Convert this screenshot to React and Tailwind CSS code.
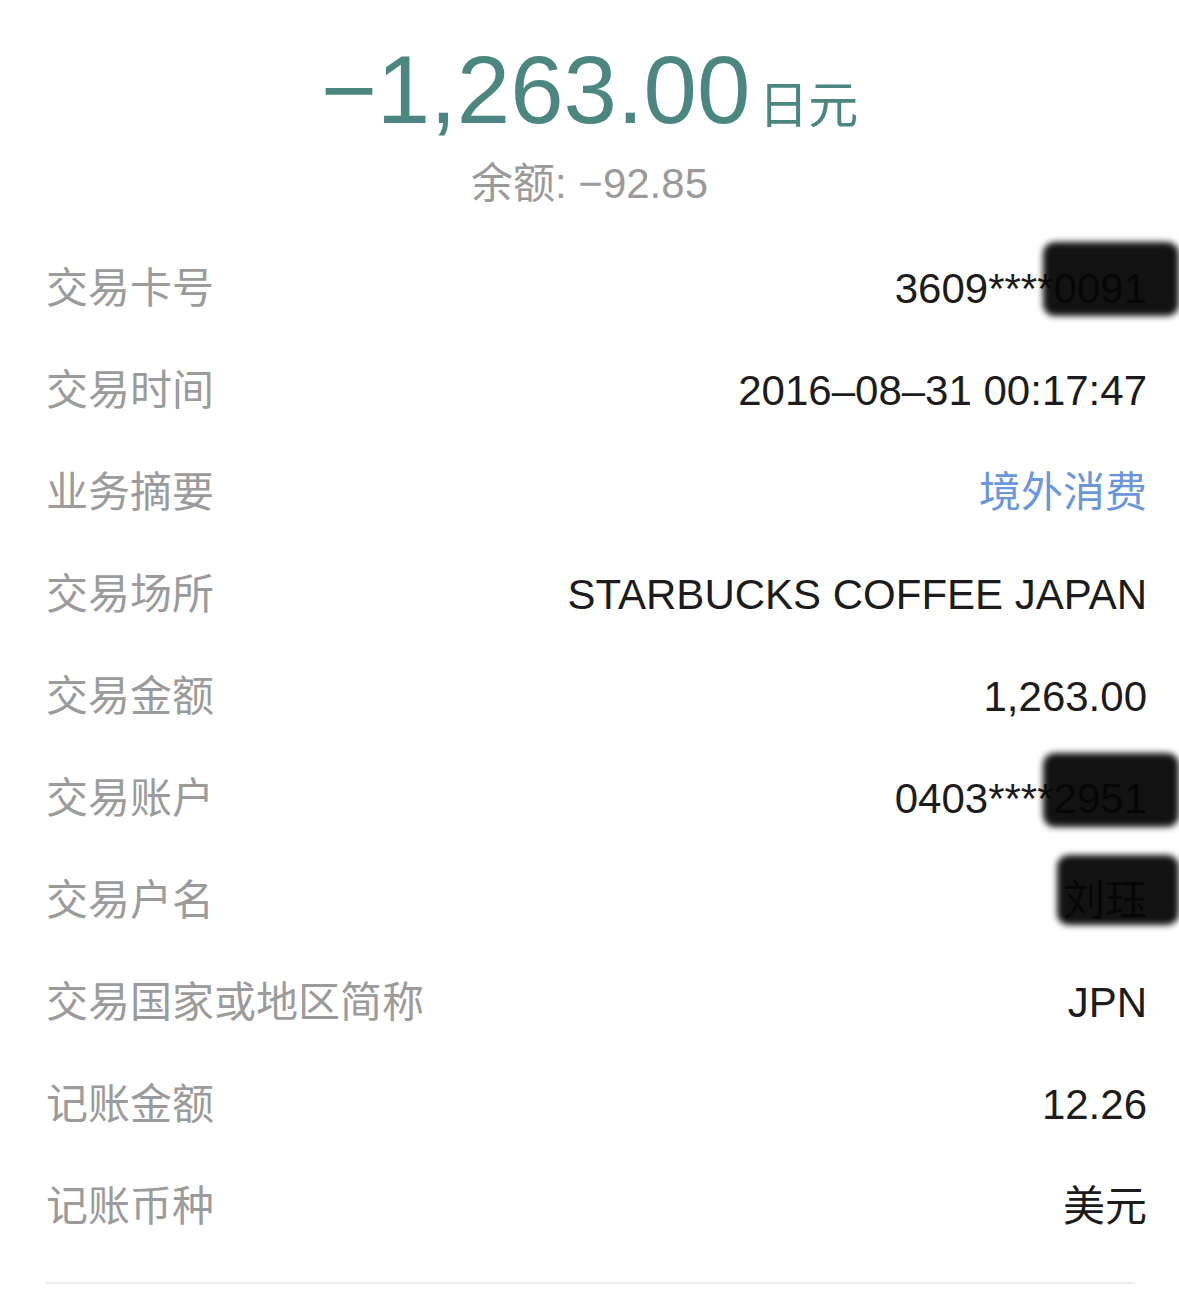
import React from "react";

const rows = [
  { label: "交易卡号", value: "3609****0091", mask: "w-[136px] h-[74px] -top-[23px]" },
  { label: "交易时间", value: "2016–08–31 00:17:47" },
  { label: "业务摘要", value: "境外消费", blue: true },
  { label: "交易场所", value: "STARBUCKS COFFEE JAPAN" },
  { label: "交易金额", value: "1,263.00" },
  { label: "交易账户", value: "0403****2951", mask: "w-[136px] h-[74px] -top-[22px]" },
  { label: "交易户名", value: "刘珏", mask: "w-[122px] h-[70px] -top-[22px]" },
  { label: "交易国家或地区简称", value: "JPN" },
  { label: "记账金额", value: "12.26" },
  { label: "记账币种", value: "美元" },
];

export default function App() {
  return (
    <div
      className="w-[1179px] h-[1293px] bg-white overflow-hidden"
      style={{ fontFamily: '"Liberation Sans", "Noto Sans CJK SC", sans-serif' }}
    >
      {/* header amount */}
      <div className="flex justify-center items-baseline pt-[42px] text-[#4b8780]">
        <span className="text-[96px] leading-[96px]">−1,263.00</span>
        <span className="text-[50px] ml-[8px]">日元</span>
      </div>
      <div className="text-center text-[42px] leading-[44px] text-[#9a9a9a] mt-[18px]">
        余额: −92.85
      </div>

      {/* detail rows */}
      <div className="mt-[32px] ml-[46px] mr-[32px]">
        {rows.map((r) => (
          <div key={r.label} className="h-[102px] flex items-center justify-between">
            <span className="text-[42px] leading-[48px] text-[#9b9b9b]">{r.label}</span>
            <span
              className={
                "relative text-[42px] leading-[48px] " +
                (r.blue ? "text-[#6b95dc]" : "text-[#1c1c1c]")
              }
            >
              {r.value}
              {r.mask && (
                <span
                  className={
                    "absolute -right-[32px] rounded-[12px] bg-[#050505]/95 blur-[3px] " + r.mask
                  }
                />
              )}
            </span>
          </div>
        ))}
        <div className="mt-[24px] h-[2px] bg-[#ececec] mr-[12px]" />
      </div>
    </div>
  );
}
